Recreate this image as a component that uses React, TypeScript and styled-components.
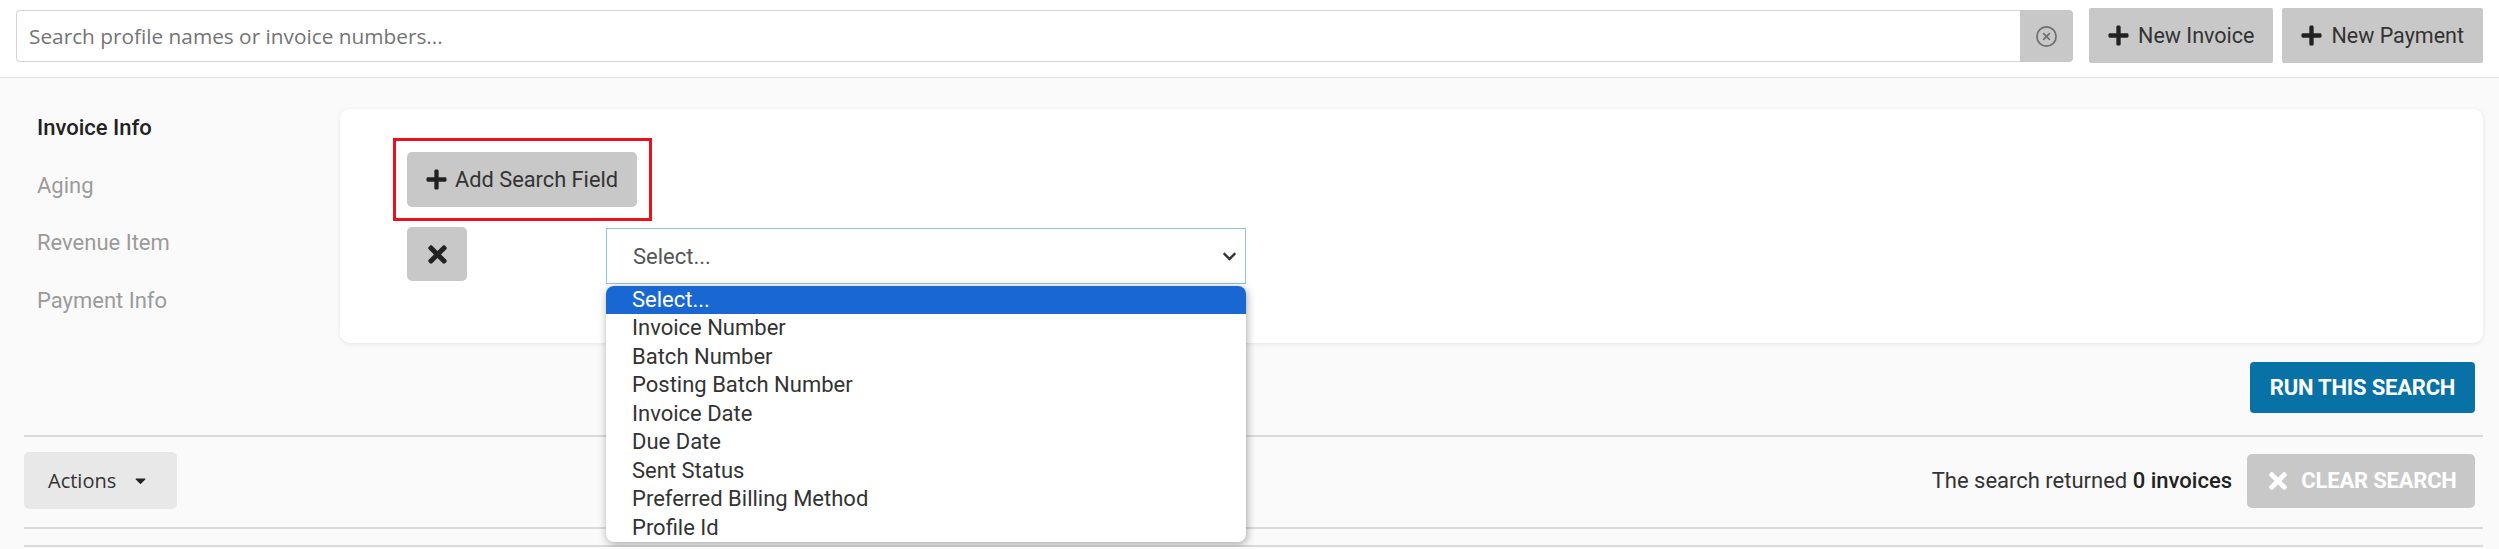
import { createGlobalStyle } from 'styled-components'
import styled from 'styled-components'
import { FaPlus, FaTimes, FaCaretDown, FaChevronDown } from 'react-icons/fa'
import { CircleX } from 'lucide-react'

const fieldOptions = [
  'Select...',
  'Invoice Number',
  'Batch Number',
  'Posting Batch Number',
  'Invoice Date',
  'Due Date',
  'Sent Status',
  'Preferred Billing Method',
  'Profile Id',
]

const navItems = ['Invoice Info', 'Aging', 'Revenue Item', 'Payment Info']

export default function App() {
  return (
    <>
      <GlobalStyle />
      <Header>
        <SearchGroup>
          <SearchInput placeholder="Search profile names or invoice numbers..." />
          <ClearInputButton aria-label="clear">
            <CircleX size={23} strokeWidth={1.8} />
          </ClearInputButton>
        </SearchGroup>
        <HeaderButton>
          <FaPlus size={23} />
          New Invoice
        </HeaderButton>
        <HeaderButton>
          <FaPlus size={23} />
          New Payment
        </HeaderButton>
      </Header>
      <Content>
        <SearchArea>
          <Sidebar>
            {navItems.map((item, i) => (
              <NavItem key={item} $active={i === 0}>
                {item}
              </NavItem>
            ))}
          </Sidebar>
          <Card>
            <Highlight>
              <AddFieldButton>
                <FaPlus size={23} />
                Add Search Field
              </AddFieldButton>
            </Highlight>
            <FieldRow>
              <RemoveButton aria-label="remove">
                <FaTimes size={27} />
              </RemoveButton>
              <SelectWrap>
                <SelectBox>
                  Select...
                  <FaChevronDown size={15} />
                </SelectBox>
                <Listbox>
                  {fieldOptions.map((opt, i) => (
                    <Option key={opt} $selected={i === 0}>
                      {opt}
                    </Option>
                  ))}
                </Listbox>
              </SelectWrap>
            </FieldRow>
          </Card>
        </SearchArea>
        <RunRow>
          <RunButton>Run this search</RunButton>
        </RunRow>
        <Divider />
        <Toolbar>
          <ActionsButton>
            Actions
            <FaCaretDown size={17} />
          </ActionsButton>
          <ResultGroup>
            <ResultText>
              The search returned <strong>0 invoices</strong>
            </ResultText>
            <ClearSearchButton>
              <FaTimes size={26} />
              Clear search
            </ClearSearchButton>
          </ResultGroup>
        </Toolbar>
        <Divider />
        <TableTop />
      </Content>
    </>
  )
}

const GlobalStyle = createGlobalStyle`
  * { box-sizing: border-box; }
  body {
    margin: 0;
    background: #fafafa;
    font-family: Roboto, 'Liberation Sans', sans-serif;
    color: #333;
  }
  button { font-family: inherit; cursor: pointer; }
`

const Header = styled.header`
  display: flex;
  align-items: flex-start;
  gap: 9px;
  height: 78px;
  padding: 8px 16px 0;
  background: #fff;
  border-bottom: 1px solid #e2e2e2;
`

const SearchGroup = styled.div`
  flex: 1;
  display: flex;
  margin: 2px 7px 0 0;
`

const SearchInput = styled.input`
  flex: 1;
  height: 52px;
  padding: 0 12px;
  border: 1px solid #d2d6dc;
  border-right: none;
  border-radius: 4px 0 0 4px;
  font-family: 'Open Sans', sans-serif;
  font-size: 20.8px;
  color: #333;
  outline: none;
  &::placeholder { color: #747474; }
`

const ClearInputButton = styled.button`
  width: 53px;
  height: 52px;
  border: none;
  border-radius: 0 4px 4px 0;
  background: #c8c8c8;
  color: #6f6f6f;
  display: flex;
  align-items: center;
  justify-content: center;
`

const HeaderButton = styled.button`
  height: 55px;
  padding: 0 19px 0 18px;
  display: flex;
  align-items: center;
  gap: 8px;
  border: none;
  border-radius: 2px;
  background: #c8c8c8;
  color: #333;
  font-size: 21.5px;
  svg { color: #222; }
`

const Content = styled.main`
  padding: 0 16px 0 24px;
`

const SearchArea = styled.div`
  display: flex;
  padding-top: 21px;
`

const Sidebar = styled.nav`
  width: 316px;
  flex: none;
  padding-left: 13px;
`

const NavItem = styled.div<{ $active?: boolean }>`
  height: 57.5px;
  line-height: 57.5px;
  font-size: 22px;
  font-weight: ${(p) => (p.$active ? 500 : 400)};
  color: ${(p) => (p.$active ? '#222' : '#9b9b9b')};
`

const Card = styled.section`
  flex: 1;
  margin-top: 10px;
  padding: 43px 0 59px 67px;
  background: #fff;
  border-radius: 10px;
  box-shadow: 0 1px 5px rgba(0, 0, 0, 0.09);
`

// red annotation frame drawn around the add button
const Highlight = styled.div`
  width: fit-content;
  margin: -14px 0 -14px -14px;
  padding: 11px 12px 11px 11px;
  border: 3px solid #e8121c;
`

const AddFieldButton = styled.button`
  height: 55px;
  padding: 0 19px 0 18px;
  display: flex;
  align-items: center;
  gap: 7px;
  border: none;
  border-radius: 5px;
  background: #c8c8c8;
  color: #333;
  font-size: 21.8px;
  svg { color: #222; }
`

const FieldRow = styled.div`
  display: flex;
  align-items: flex-start;
  margin-top: 20px;
`

const RemoveButton = styled.button`
  width: 60px;
  height: 54px;
  margin-right: 139px;
  border: none;
  border-radius: 5px;
  background: #c8c8c8;
  color: #222;
  display: flex;
  align-items: center;
  justify-content: center;
`

const SelectWrap = styled.div`
  position: relative;
  width: 640px;
  margin-top: 1px;
`

const SelectBox = styled.div`
  height: 56px;
  padding: 0 8px 0 26px;
  display: flex;
  align-items: center;
  justify-content: space-between;
  border: 1px solid #8ec3ef;
  background: #fff;
  font-size: 22px;
  color: #555;
  svg { color: #333; }
`

const Listbox = styled.ul`
  position: absolute;
  top: calc(100% + 2px);
  left: 0;
  width: 100%;
  margin: 0;
  padding: 0;
  list-style: none;
  background: #fff;
  border-radius: 8px;
  overflow: hidden;
  box-shadow: 1px 2px 8px rgba(0, 0, 0, 0.35);
  z-index: 5;
`

const Option = styled.li<{ $selected?: boolean }>`
  height: 28.44px;
  line-height: 28.44px;
  padding-left: 26px;
  font-size: 22px;
  color: ${(p) => (p.$selected ? '#fff' : '#333')};
  background: ${(p) => (p.$selected ? '#1967d2' : 'transparent')};
`

const RunRow = styled.div`
  display: flex;
  justify-content: flex-end;
  padding: 19px 8px 22px 0;
`

const RunButton = styled.button`
  width: 225px;
  height: 51px;
  padding: 0;
  border: none;
  border-radius: 4px;
  background: #0872a7;
  color: #fff;
  font-size: 22px;
  font-weight: 700;
  text-transform: uppercase;
  letter-spacing: -0.2px;
`

const Divider = styled.hr`
  height: 2px;
  margin: 0;
  border: none;
  background: #dadada;
`

const Toolbar = styled.div`
  display: flex;
  align-items: center;
  justify-content: space-between;
  padding: 15px 8px 18px 0;
`

const ActionsButton = styled.button`
  width: 153px;
  height: 57px;
  padding: 0 0 0 24px;
  display: flex;
  align-items: center;
  gap: 16px;
  border: none;
  border-radius: 5px;
  background: #e8e8e8;
  color: #333;
  font-family: 'Open Sans', sans-serif;
  font-size: 20px;
  svg { color: #222; }
`

const ResultGroup = styled.div`
  display: flex;
  align-items: center;
  gap: 15px;
`

const ResultText = styled.span`
  font-size: 22px;
  color: #333;
  strong { font-weight: 500; color: #222; }
`

const ClearSearchButton = styled.button`
  width: 228px;
  height: 54px;
  display: flex;
  align-items: center;
  justify-content: center;
  gap: 10px;
  border: none;
  border-radius: 5px;
  background: #c8c8c8;
  color: #fff;
  font-size: 22px;
  font-weight: 700;
  text-transform: uppercase;
  letter-spacing: -0.2px;
`

const TableTop = styled.div`
  height: 18px;
  border-bottom: 2px solid #dadada;
`
